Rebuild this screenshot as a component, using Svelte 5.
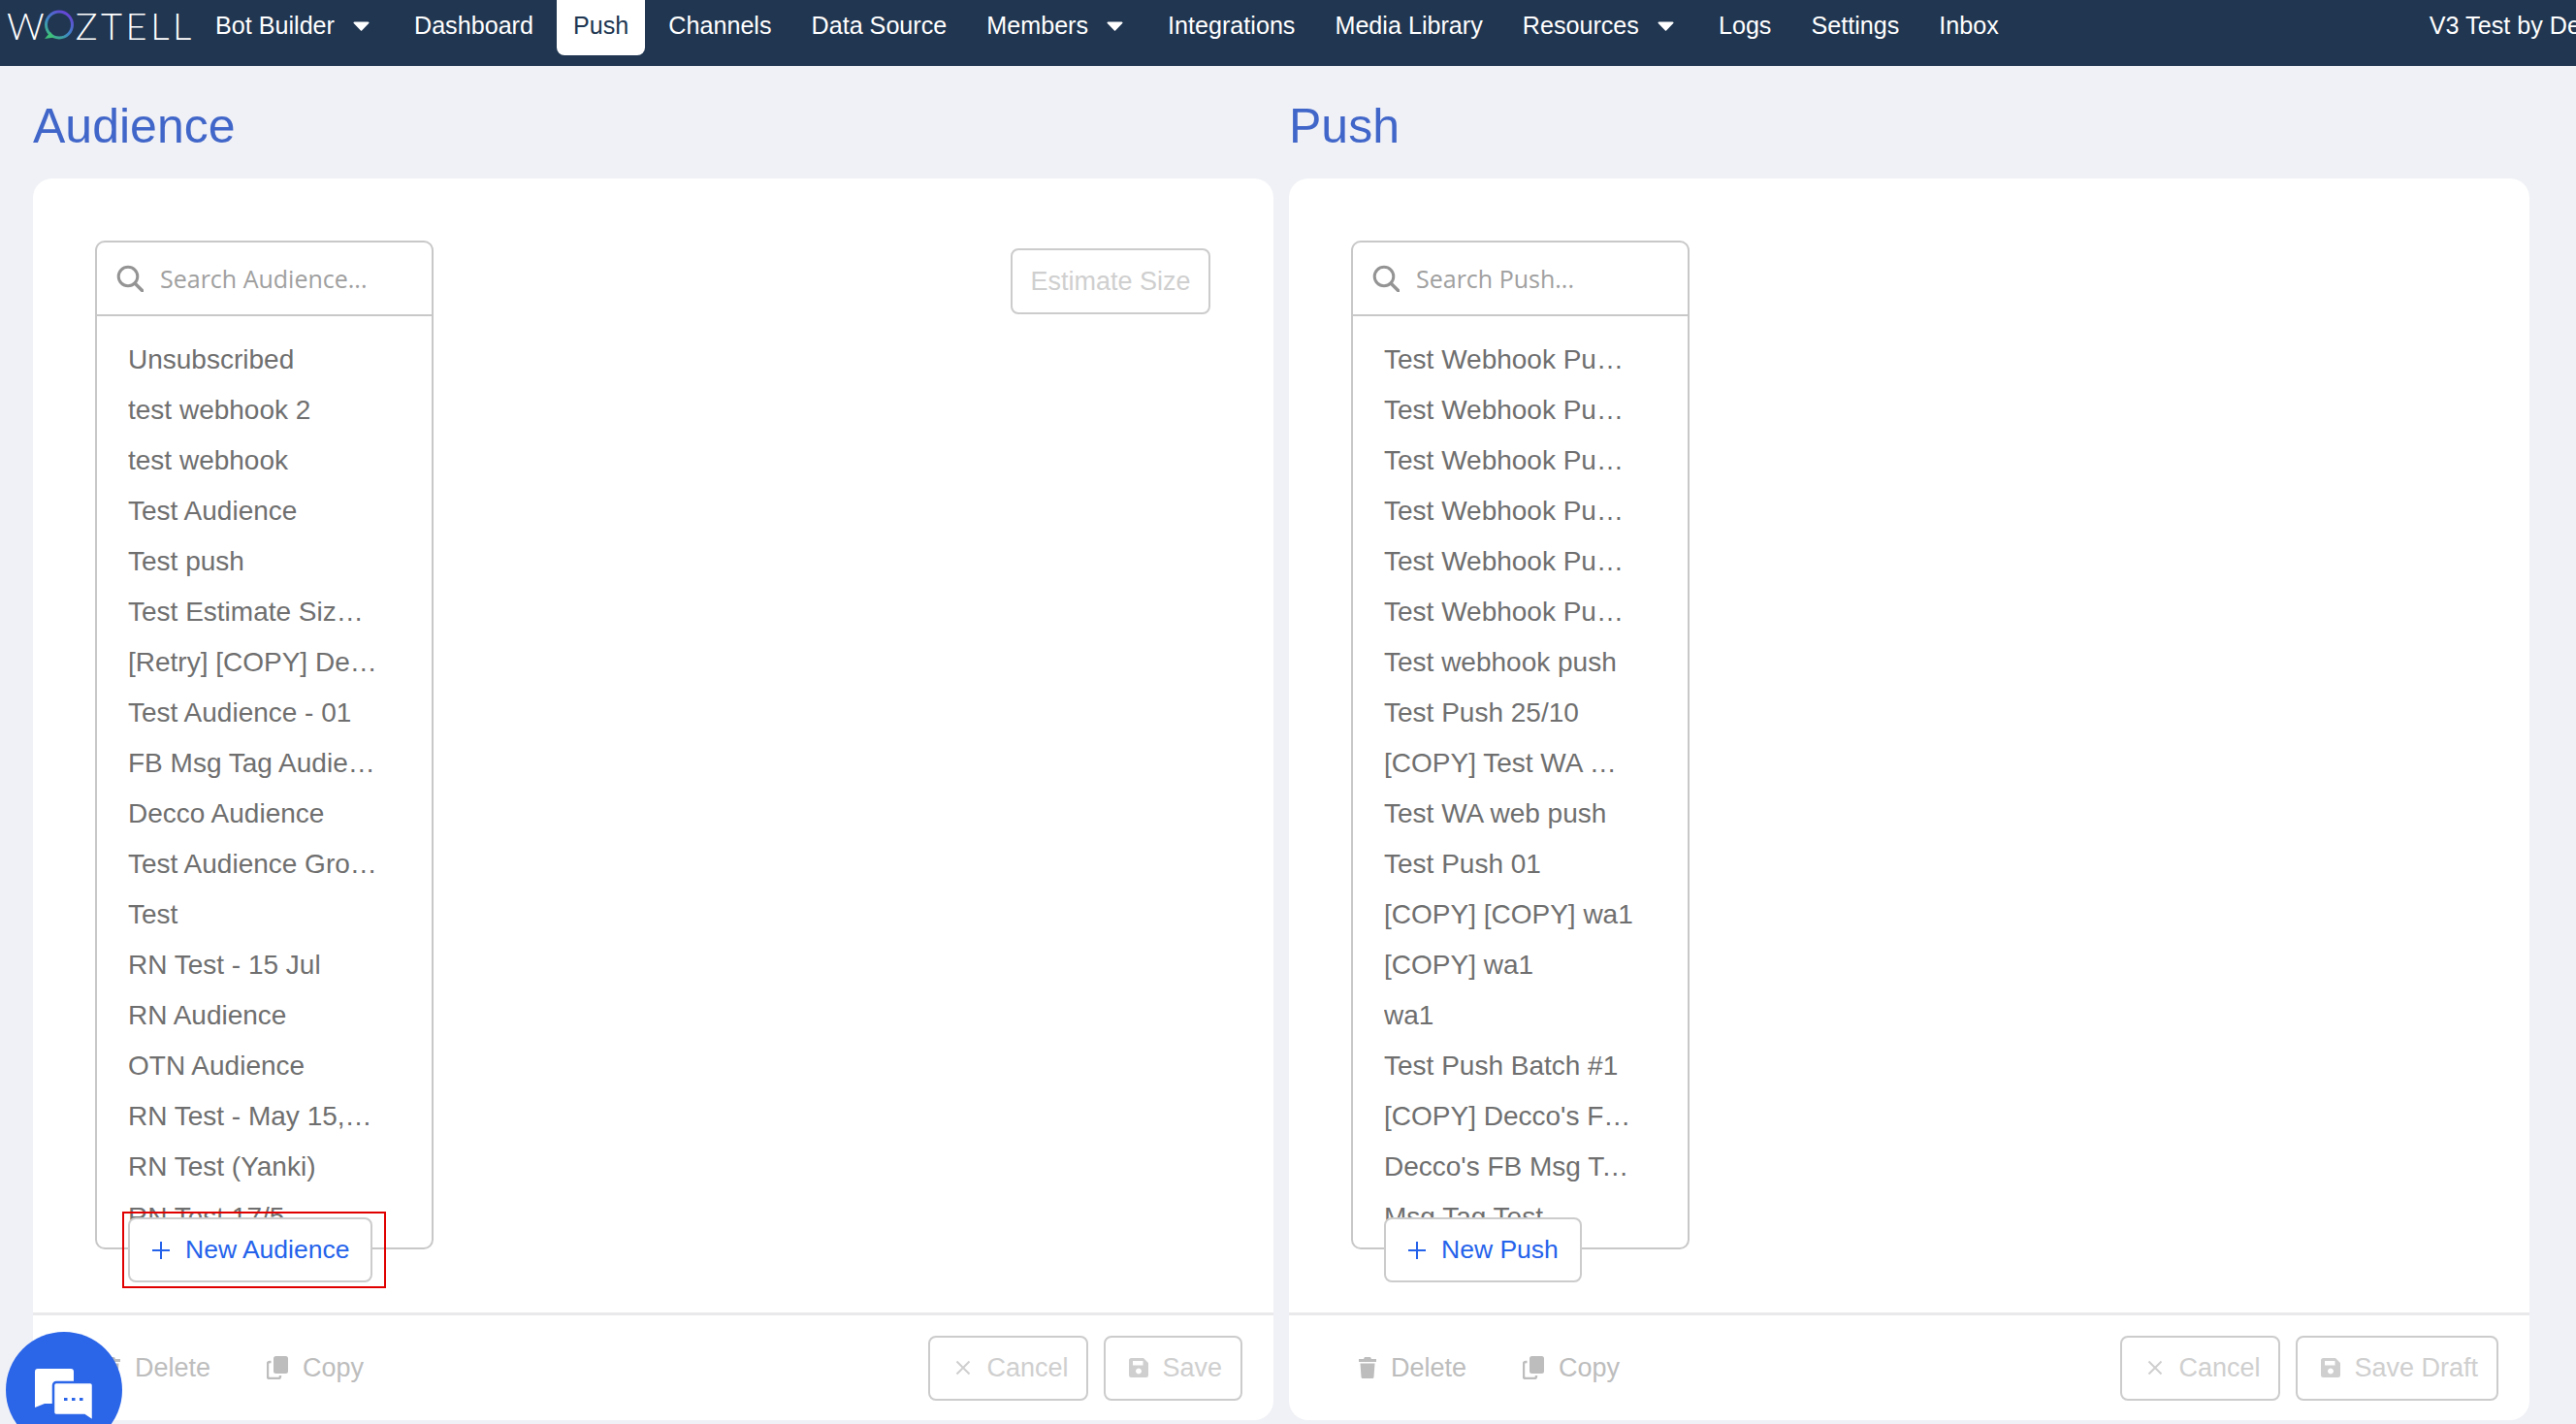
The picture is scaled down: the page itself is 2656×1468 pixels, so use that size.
<script>
  const nav = [
    { label: 'Bot Builder', caret: true },
    { label: 'Dashboard' },
    { label: 'Push', active: true },
    { label: 'Channels' },
    { label: 'Data Source' },
    { label: 'Members', caret: true },
    { label: 'Integrations' },
    { label: 'Media Library' },
    { label: 'Resources', caret: true },
    { label: 'Logs' },
    { label: 'Settings' },
    { label: 'Inbox' }
  ];

  const audiences = [
    'Unsubscribed', 'test webhook 2', 'test webhook', 'Test Audience', 'Test push',
    'Test Estimate Size 01', '[Retry] [COPY] Decco Audience', 'Test Audience - 01',
    'FB Msg Tag Audience 01', 'Decco Audience', 'Test Audience Group 1', 'Test',
    'RN Test - 15 Jul', 'RN Audience', 'OTN Audience', 'RN Test - May 15, 2020',
    'RN Test (Yanki)', 'RN Test 17/5'
  ];

  const pushes = [
    'Test Webhook Push 06', 'Test Webhook Push 05', 'Test Webhook Push 04',
    'Test Webhook Push 03', 'Test Webhook Push 02', 'Test Webhook Push 01',
    'Test webhook push', 'Test Push 25/10', '[COPY] Test WA web push', 'Test WA web push',
    'Test Push 01', '[COPY] [COPY] wa1', '[COPY] wa1', 'wa1', 'Test Push Batch #1',
    "[COPY] Decco's FB Msg Tag", "Decco's FB Msg Tag Test", 'Msg Tag Test'
  ];

  const panels = [
    { title: 'Audience', search: 'Search Audience...', items: audiences, add: 'New Audience', save: 'Save', estimate: true },
    { title: 'Push', search: 'Search Push...', items: pushes, add: 'New Push', save: 'Save Draft', estimate: false }
  ];
</script>

<div class="page">
  <header class="topbar">
    <div class="logo">
      <span>W</span>
      <svg class="ring" viewBox="0 0 32 32" width="32" height="32" aria-hidden="true">
        <defs>
          <linearGradient id="ringGrad" x1="0.1" y1="1" x2="0.8" y2="0">
            <stop offset="0" stop-color="#3fc07a" />
            <stop offset="0.45" stop-color="#3d86c6" />
            <stop offset="1" stop-color="#6a3fd6" />
          </linearGradient>
        </defs>
        <circle cx="16" cy="15.5" r="13.5" fill="none" stroke="url(#ringGrad)" stroke-width="3" />
        <path d="M1 30 L7 23 L11 28.5 Z" fill="#3fc07a" />
      </svg>
      <span class="rest">ZTELL</span>
    </div>
    {#each nav as item}
      <div class="nav-item" class:active={item.active}>
        {item.label}
        {#if item.caret}
          <svg class="caret" viewBox="0 0 17 10" width="17" height="10" aria-hidden="true">
            <path d="M1.5 0.5 H15.5 a1 1 0 0 1 .8 1.6 L9.3 9.3 a1 1 0 0 1 -1.6 0 L.7 2.1 A1 1 0 0 1 1.5 .5 Z" fill="#fff" />
          </svg>
        {/if}
      </div>
    {/each}
    <div class="account">V3 Test by Decco</div>
  </header>

  <main class="columns">
    {#each panels as panel}
      <section class="column">
        <h1>{panel.title}</h1>
        <div class="panel">
          <div class="body">
            <div class="picker">
              <div class="listbox">
                <div class="search">
                  <svg viewBox="0 0 28 28" width="28" height="28" aria-hidden="true">
                    <circle cx="12" cy="12" r="9.8" fill="none" stroke="#949494" stroke-width="3" />
                    <path d="M19 19 L27 27" stroke="#949494" stroke-width="3.4" stroke-linecap="round" />
                  </svg>
                  <span>{panel.search}</span>
                </div>
                <ul>
                  {#each panel.items as name}
                    <li>{name}</li>
                  {/each}
                </ul>
              </div>
              <button class="btn add">
                <svg viewBox="0 0 18 18" width="18" height="18" aria-hidden="true">
                  <path d="M9 0 V18 M0 9 H18" stroke="#2563eb" stroke-width="2" />
                </svg>
                {panel.add}
              </button>
            </div>
            {#if panel.estimate}
              <button class="btn ghost estimate">Estimate Size</button>
            {/if}
          </div>
          <footer>
            <span class="action">
              <svg viewBox="0 0 18 22" width="18" height="22" aria-hidden="true">
                <path d="M6 0 H12 L13 2 H18 V5 H0 V2 H5 Z M1.5 6.5 H16.5 L15.5 20.5 a1.6 1.6 0 0 1 -1.6 1.5 H4.1 a1.6 1.6 0 0 1 -1.6 -1.5 Z" fill="#bdbdbd" />
              </svg>
              Delete
            </span>
            <span class="action">
              <svg viewBox="0 0 22 24" width="22" height="24" aria-hidden="true">
                <rect x="7" y="0" width="15" height="18" rx="2.5" fill="#bdbdbd" />
                <path d="M4.5 6 H3 a2 2 0 0 0 -2 2 V21 a2 2 0 0 0 2 2 H12 a2 2 0 0 0 2 -2 V20" fill="none" stroke="#bdbdbd" stroke-width="2.4" />
              </svg>
              Copy
            </span>
            <span class="spacer"></span>
            <button class="btn ghost">
              <svg viewBox="0 0 20 20" width="20" height="20" aria-hidden="true">
                <path d="M3.5 3.5 L16.5 16.5 M16.5 3.5 L3.5 16.5" stroke="#cfcfcf" stroke-width="2" />
              </svg>
              Cancel
            </button>
            <button class="btn ghost">
              <svg viewBox="0 0 20 20" width="20" height="20" aria-hidden="true">
                <path fill-rule="evenodd" d="M2.5 0 H15 L20 5 V17.500 a2.500 2.500 0 0 1 -2.500 2.500 H2.500 A2.500 2.500 0 0 1 0 17.500 V2.500 A2.500 2.500 0 0 1 2.500 0 Z M4 3 V7.500 H14.500 V3 Z M10 10.500 a3 3 0 1 0 .01 0 Z" fill="#cfcfcf" />
              </svg>
              {panel.save}
            </button>
          </footer>
        </div>
      </section>
    {/each}
  </main>

  <div class="annotation"></div>

  <div class="chat">
    <svg viewBox="0 0 60 54" width="60" height="54" aria-hidden="true">
      <path d="M3 0 H37 a3 3 0 0 1 3 3 V36 H10 L0 40 V3 a3 3 0 0 1 3 -3 Z" fill="#fff" />
      <path d="M22 14 H57 a3 3 0 0 1 3 3 V54 L51 48 H22 a3 3 0 0 1 -3 -3 V17 a3 3 0 0 1 3 -3 Z" fill="#fff" stroke="#2b65e8" stroke-width="2.500" />
      <path d="M30 31.500 H33.500 M38 31.500 H41.500 M46 31.500 H49.500" stroke="#2b65e8" stroke-width="3.200" />
    </svg>
  </div>
</div>

<style>
  :global(body) {
    margin: 0;
    background: #f0f1f6;
  }

  .page {
    position: relative;
    height: 1468px;
    overflow: hidden;
    background: #f0f1f6;
    font-family: "Liberation Sans", Arial, sans-serif;
  }

  .topbar {
    display: flex;
    align-items: flex-start;
    gap: 7px;
    height: 68px;
    padding-left: 7px;
    background: #203651;
    color: #fff;
    font-size: 25.15px;
    white-space: nowrap;
    overflow: hidden;
  }
  .logo {
    display: flex;
    align-items: center;
    width: 191px;
    height: 52px;
    flex-shrink: 0;
    font-family: Lato, sans-serif;
    font-weight: 300;
    font-size: 38px;
  }
  .rest {
    letter-spacing: 3.6px;
  }
  .ring {
    flex-shrink: 0;
    margin: 0 1px 0 -1px;
  }
  .nav-item {
    display: flex;
    align-items: center;
    flex-shrink: 0;
    height: 53px;
    padding: 0 17px;
    border-radius: 0 0 8px 8px;
  }
  .nav-item.active {
    height: 57px;
    padding-bottom: 4px;
    box-sizing: border-box;
    background: #fff;
    color: #203651;
  }
  .caret {
    margin-left: 19px;
    margin-right: 5px;
  }
  .account {
    flex-shrink: 0;
    height: 53px;
    line-height: 53px;
    margin-left: 420px;
  }

  .columns {
    display: grid;
    grid-template-columns: 1279px 1279px;
    gap: 16px;
    padding-left: 34px;
  }
  h1 {
    margin: 0;
    height: 116px;
    line-height: 125px;
    font-size: 50px;
    font-weight: 400;
    color: #4166c9;
  }
  .panel {
    display: flex;
    flex-direction: column;
    height: 1280px;
    background: #fff;
    border-radius: 20px;
  }
  .body {
    display: flex;
    justify-content: space-between;
    align-items: flex-start;
    height: 1169px;
    box-sizing: border-box;
    padding: 64px 65px 0 64px;
  }

  .picker {
    position: relative;
    width: 349px;
  }
  .listbox {
    height: 1040px;
    box-sizing: border-box;
    border: 2px solid #c8c8c8;
    border-radius: 10px;
    overflow: hidden;
  }
  .search {
    display: flex;
    align-items: center;
    gap: 17px;
    height: 74px;
    padding-left: 20px;
    border-bottom: 2px solid #c8c8c8;
    font-family: "Open Sans", sans-serif;
    font-size: 25px;
    color: #a0a0a0;
    white-space: nowrap;
  }
  ul {
    list-style: none;
    margin: 0;
    padding: 19px 0 0 32px;
  }
  li {
    width: 257px;
    height: 52px;
    line-height: 52px;
    font-size: 28px;
    color: #6f6f6f;
    white-space: nowrap;
    overflow: hidden;
    text-overflow: ellipsis;
  }

  .btn {
    display: inline-flex;
    align-items: center;
    justify-content: center;
    gap: 14px;
    height: 67px;
    box-sizing: border-box;
    padding: 0 19px 0 24px;
    background: #fff;
    border: 2px solid #cccccc;
    border-radius: 8px;
    font-family: inherit;
    font-size: 27px;
    white-space: nowrap;
  }
  .add {
    position: absolute;
    left: 34px;
    top: 1007px;
    gap: 16px;
    padding: 0 22px 0 23px;
    font-size: 26.5px;
    color: #2563eb;
  }
  .ghost {
    color: #cfcfcf;
  }
  .estimate {
    width: 206px;
    height: 68px;
    margin-top: 8px;
    padding: 0;
  }

  footer {
    display: flex;
    align-items: center;
    gap: 16px;
    flex: 1;
    padding: 0 32px 0 72px;
    border-top: 3px solid #e9e9ec;
  }
  .action {
    display: inline-flex;
    align-items: center;
    gap: 15px;
    margin-right: 42px;
    font-size: 27px;
    color: #bdbdbd;
  }
  .spacer {
    flex: 1;
  }

  .annotation {
    position: absolute;
    left: 126px;
    top: 1249px;
    width: 272px;
    height: 79px;
    box-sizing: border-box;
    border: 2px solid #e00000;
  }
  .chat {
    position: absolute;
    left: 6px;
    top: 1373px;
    width: 120px;
    height: 120px;
    border-radius: 50%;
    background: #2b65e8;
  }
  .chat svg {
    position: absolute;
    left: 30px;
    top: 38px;
  }
</style>
